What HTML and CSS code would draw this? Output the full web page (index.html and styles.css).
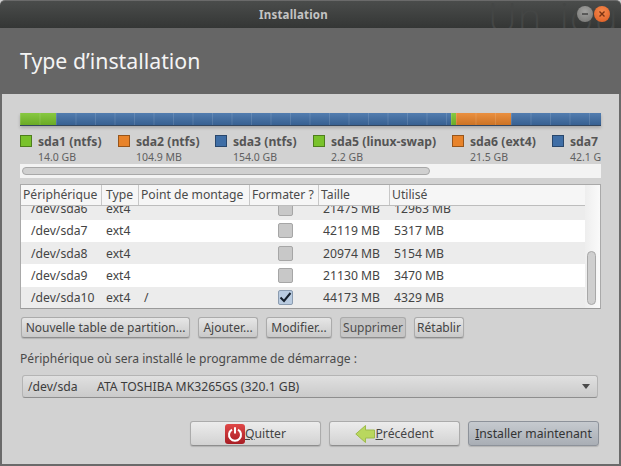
FILE: index.html
```html
<!DOCTYPE html>
<html lang="fr">
<head>
  <meta charset="UTF-8" />
  <title>Installation</title>
  <link rel="stylesheet" href="styles.css">
</head>
<body>
  <div class="window">

    <div class="titlebar">
      <span class="wallpaper-text">Un jour</span>
      <span class="title">Installation</span>
      <div class="win-buttons">
        <span class="win-btn min"><svg width="8" height="8" viewBox="0 0 8 8"><path d="M1 4h6" stroke="#444" stroke-width="1.5"/></svg></span>
        <span class="win-btn close"><svg width="8" height="8" viewBox="0 0 8 8"><path d="M1.500 1.500l5 5M6.500 1.500l-5 5" stroke="#7a3312" stroke-width="1.400"/></svg></span>
      </div>
    </div>

    <div class="header">
      <h1>Type d’installation</h1>
    </div>

    <div class="content">

      <!-- Partition bar -->
      <div class="part-bar">
        <span class="seg green s1"></span>
        <span class="seg blue s2"></span>
        <span class="seg green s3"></span>
        <span class="seg orange s4"></span>
        <span class="seg blue s5"></span>
      </div>

      <div class="legend">
        <div class="legend-item w1"><span class="swatch green"></span><div><b>sda1 (ntfs)</b><small>14.0 GB</small></div></div>
        <div class="legend-item w2"><span class="swatch orange"></span><div><b>sda2 (ntfs)</b><small>104.9 MB</small></div></div>
        <div class="legend-item w3"><span class="swatch blue"></span><div><b>sda3 (ntfs)</b><small>154.0 GB</small></div></div>
        <div class="legend-item w4"><span class="swatch green"></span><div><b>sda5 (linux-swap)</b><small>2.2 GB</small></div></div>
        <div class="legend-item w5"><span class="swatch orange"></span><div><b>sda6 (ext4)</b><small>21.5 GB</small></div></div>
        <div class="legend-item w6"><span class="swatch blue"></span><div><b>sda7</b><small>42.1 GB</small></div></div>
      </div>

      <div class="hscroll"><div class="hscroll-thumb"></div></div>

      <!-- Partition table -->
      <div class="tree">
        <div class="tree-main">
          <div class="row head">
            <span>Périphérique</span><span>Type</span><span>Point de montage</span><span>Formater ?</span><span>Taille</span><span>Utilisé</span>
          </div>
          <div class="rows">
            <div class="row first alt"><span class="dev">/dev/sda6</span><span>ext4</span><span></span><span class="box-cell"><i class="check"></i></span><span class="num">21475 MB</span><span class="num">12963 MB</span></div>
            <div class="row"><span class="dev">/dev/sda7</span><span>ext4</span><span></span><span class="box-cell"><i class="check"></i></span><span class="num">42119 MB</span><span class="num">5317 MB</span></div>
            <div class="row alt"><span class="dev">/dev/sda8</span><span>ext4</span><span></span><span class="box-cell"><i class="check"></i></span><span class="num">20974 MB</span><span class="num">5154 MB</span></div>
            <div class="row"><span class="dev">/dev/sda9</span><span>ext4</span><span></span><span class="box-cell"><i class="check"></i></span><span class="num">21130 MB</span><span class="num">3470 MB</span></div>
            <div class="row alt"><span class="dev">/dev/sda10</span><span>ext4</span><span class="mount">/</span><span class="box-cell"><i class="check on"><svg width="13" height="11" viewBox="0 0 13 11"><path d="M1.500 5.500l3.500 3.500 6.500-8" fill="none" stroke="#16202c" stroke-width="2"/></svg></i></span><span class="num">44173 MB</span><span class="num">4329 MB</span></div>
          </div>
        </div>
        <div class="vscroll"><div class="vscroll-thumb"></div></div>
      </div>

      <div class="actions">
        <button class="btn act-new">Nouvelle table de partition...</button>
        <button class="btn act-add">Ajouter...</button>
        <button class="btn act-edit">Modifier...</button>
        <button class="btn act-del flat">Supprimer</button>
        <button class="btn act-undo">Rétablir</button>
      </div>

      <p class="boot-label">Périphérique où sera installé le programme de démarrage :</p>

      <div class="combo">
        <span class="combo-dev">/dev/sda</span>
        <span class="combo-name">ATA TOSHIBA MK3265GS (320.1 GB)</span>
        <span class="combo-arrow"></span>
      </div>

      <div class="footer">
        <button class="btn big">
          <span class="quit-icon"><svg width="16" height="16" viewBox="0 0 16 16"><path d="M5 3.600a6 6 0 1 0 6 0" fill="none" stroke="#fff" stroke-width="2"/><path d="M8 1.200v6.400" stroke="#fff" stroke-width="2"/></svg></span><span class="under-icon"><u>Q</u>uitter</span>
        </button>
        <button class="btn big">
          <svg width="20" height="20" viewBox="0 0 20 20"><path d="M.8 10 10.500 1.500V6H19.500V14H10.500V18.500Z" fill="#b9d75e" stroke="#9dbb4c" stroke-width="1"/></svg><span><u>P</u>récédent</span>
        </button>
        <button class="btn big primary"><span><u>I</u>nstaller maintenant</span></button>
      </div>

    </div>
  </div>
</body>
</html>
```

FILE: styles.css
```css
* {
  box-sizing: border-box;
}

html, body {
  margin: 0;
  height: 466px;
  overflow: hidden;
}

body {
  font-family: "Noto Sans", "Open Sans", sans-serif;
  font-size: 12px;
  color: #3c3c3c;
  background: #d0d0d0;
}

.window {
  height: 466px;
  display: flex;
  flex-direction: column;
  overflow: hidden;
}

/* Title bar */
.titlebar {
  height: 28px;
  flex: none;
  background: linear-gradient(#4a4c4b, #343635);
  border-top: 1px solid #6a6a6a;
  border-radius: 5px 5px 0 0;
  display: flex;
  align-items: center;
  justify-content: center;
  position: relative;
  overflow: hidden;
}

.title {
  font-size: 11.5px;
  font-weight: bold;
  color: #c4c4c4;
  letter-spacing: 0.2px;
  margin-right: 34px;
}

.wallpaper-text {
  position: absolute;
  left: 488px;
  top: -12px;
  font-size: 40px;
  font-family: "Open Sans", sans-serif;
  font-weight: 300;
  letter-spacing: 1px;
  word-spacing: 6px;
  color: #444645;
  white-space: nowrap;
}

.win-buttons {
  position: absolute;
  right: 11px;
  top: 5px;
  display: flex;
  gap: 1px;
}

.win-btn {
  width: 16px;
  height: 16px;
  border-radius: 50%;
  display: flex;
  align-items: center;
  justify-content: center;
}

.win-btn.min {
  background: radial-gradient(circle at 50% 35%, #a2a2a0, #737371);
}

.win-btn.close {
  background: radial-gradient(circle at 50% 35%, #f58a4e, #dd5a20);
}

/* Header */
.header {
  height: 66px;
  flex: none;
  background: #666;
  display: flex;
  align-items: center;
  padding: 0 20px 2px;
}

h1 {
  margin: 0;
  font-size: 21.3px;
  font-weight: normal;
  color: #f4f4f4;
}

/* Main area */
.content {
  flex: 1;
  padding: 19px 18px 0;
  background: #d2d2d2;
  border: 2px solid #6a6a6a;
  border-top: none;
}

.part-bar {
  height: 13px;
  display: flex;
  border-bottom: 1px solid #33465e;
  box-shadow: 0 2px 3px rgba(0, 0, 0, 0.2);
}

.seg {
  display: block;
  background-image: linear-gradient(90deg, rgba(255, 255, 255, 0.12) 1px, transparent 1px), linear-gradient(rgba(255, 255, 255, 0.1), rgba(0, 0, 0, 0.12));
  background-size: 19.5px 100%, 100% 100%;
}

.seg.green { background-color: #79c22b; }
.seg.blue { background-color: #3f6ea6; }
.seg.orange { background-color: #e8832a; }

.s1 { width: 36px; }
.s2 { width: 395px; }
.s3 { width: 5px; }
.s4 { width: 55px; }
.s5 { flex: 1; }

.legend {
  display: flex;
  margin-top: 8px;
  height: 30px;
  overflow: hidden;
}

.legend-item {
  display: flex;
  flex: none;
  gap: 6px;
  white-space: nowrap;
}

.w1 { width: 98px; }
.w2 { width: 97px; }
.w3 { width: 98px; }
.w4 { width: 139px; }
.w5 { width: 100px; }
.w6 { width: 49px; overflow: hidden; }

.swatch {
  width: 12px;
  height: 12px;
  flex: none;
  margin-top: 1px;
  border: 1px solid rgba(0, 0, 0, 0.35);
}

.swatch.green { background: #79c22b; }
.swatch.blue { background: #3f6ea6; }
.swatch.orange { background: #e8832a; }

.legend-item b {
  display: block;
  font-size: 12.2px;
  line-height: 16px;
  font-weight: bold;
  color: #555;
}

.legend-item small {
  display: block;
  font-size: 10.5px;
  line-height: 14px;
  color: #606060;
}

.hscroll {
  height: 14px;
  background: #f3f3f3;
  padding: 3px 2px;
}

.hscroll-thumb {
  width: 408px;
  height: 8px;
  border-radius: 4px;
  border: 1px solid #a8a8a8;
  background: #d0d0d0;
}

/* Table */
.tree {
  height: 125px;
  margin-top: 6px;
  display: flex;
  background: #f8f8f8;
  border: 1px solid #a9a9a9;
  border-bottom-color: #9a9a9a;
  overflow: hidden;
}

.tree-main {
  width: 564px;
  flex: none;
}

.row {
  display: grid;
  grid-template-columns: 81px 37px 111px 69px 71px 1fr;
  height: 22.3px;
  align-items: center;
  font-size: 12.2px;
  background: #fff;
  color: #444;
}

.row.alt {
  background: #ececec;
}

.row.head {
  height: 21px;
  background: #f6f6f6;
  border-bottom: 1px solid #bdbdbd;
  color: #4a4a4a;
  position: relative;
  z-index: 1;
}

.row.head span {
  height: 20px;
  line-height: 19px;
  padding-left: 2px;
  border-right: 1px solid #c8c8c8;
  white-space: nowrap;
  overflow: hidden;
}

.row.head span:last-child {
  border-right: none;
}

.rows {
  height: 103px;
  overflow: hidden;
}

.row.first {
  margin-top: -8.5px;
}

.row .dev {
  padding-left: 10px;
}

.row span:nth-child(2) {
  padding-left: 4px;
}

.row .mount {
  padding-left: 5px;
}

.row .num {
  padding-left: 4px;
  white-space: nowrap;
}

.box-cell {
  display: flex;
  justify-content: center;
  padding-left: 2px;
}

.check {
  width: 15px;
  height: 15px;
  border: 1px solid #a6a6a6;
  border-radius: 2px;
  background: #c8c8c8;
  display: flex;
  align-items: center;
  justify-content: center;
}

.check.on {
  background: #b9cbe0;
  border-color: #8b9cb0;
}

.vscroll {
  flex: 1;
  padding-top: 66px;
  display: flex;
  justify-content: center;
  background: linear-gradient(90deg, #eeeeee, #fafafa);
}

.vscroll-thumb {
  width: 9px;
  height: 54px;
  border: 1px solid #a8a8a8;
  border-radius: 5px;
  background: #cfcfcf;
  margin-right: 3px;
}

/* Buttons */
.btn {
  font-family: inherit;
  font-size: 12px;
  color: #444;
  height: 21px;
  padding: 0;
  border: 1px solid #ababab;
  border-bottom-color: #8e8e8e;
  border-radius: 3px;
  background: linear-gradient(#e6e6e6, #c9c9c9);
  box-shadow: 0 1px 1px rgba(0, 0, 0, 0.15);
  white-space: nowrap;
}

.btn.flat {
  background: #c6c6c6;
  color: #4e4e4e;
}

.actions {
  display: flex;
  gap: 8px;
  margin-top: 8px;
  padding-left: 1px;
}

.act-new { width: 169px; }
.act-add { width: 60px; }
.act-edit { width: 66px; }
.act-del { width: 66px; }
.act-undo { width: 50px; }

.boot-label {
  margin: 12px 0 0;
  font-size: 12.1px;
  line-height: 17px;
  color: #4a4a4a;
}

.combo {
  height: 23px;
  margin: 8px 3px 0 2px;
  padding: 0 7px 0 5px;
  display: flex;
  align-items: center;
  font-size: 12.2px;
  border: 1px solid #b4b4b4;
  border-bottom-color: #8e8e8e;
  border-radius: 3px;
  background: linear-gradient(#e0e0e0, #cacaca);
}

.combo-dev {
  width: 69px;
}

.combo-name {
  flex: 1;
}

.combo-arrow {
  width: 0;
  height: 0;
  border-left: 4px solid transparent;
  border-right: 4px solid transparent;
  border-top: 5px solid #4a4a4a;
}

.footer {
  display: flex;
  justify-content: flex-end;
  gap: 8px;
  margin-top: 23px;
  padding-right: 2px;
}

.btn.big {
  height: 25px;
  width: 131px;
  font-size: 12.2px;
  display: flex;
  align-items: center;
  justify-content: center;
  background: linear-gradient(#ececec, #d2d2d2);
  padding: 0;
}

.btn.big.primary {
  background: linear-gradient(#c6cacf, #a9aeb5);
  color: #333;
  border-color: #8d929a;
}

.quit-icon {
  width: 20px;
  height: 20px;
  border-radius: 3px;
  background: linear-gradient(#e04848, #a81d24);
  display: flex;
  align-items: center;
  justify-content: center;
}
```
